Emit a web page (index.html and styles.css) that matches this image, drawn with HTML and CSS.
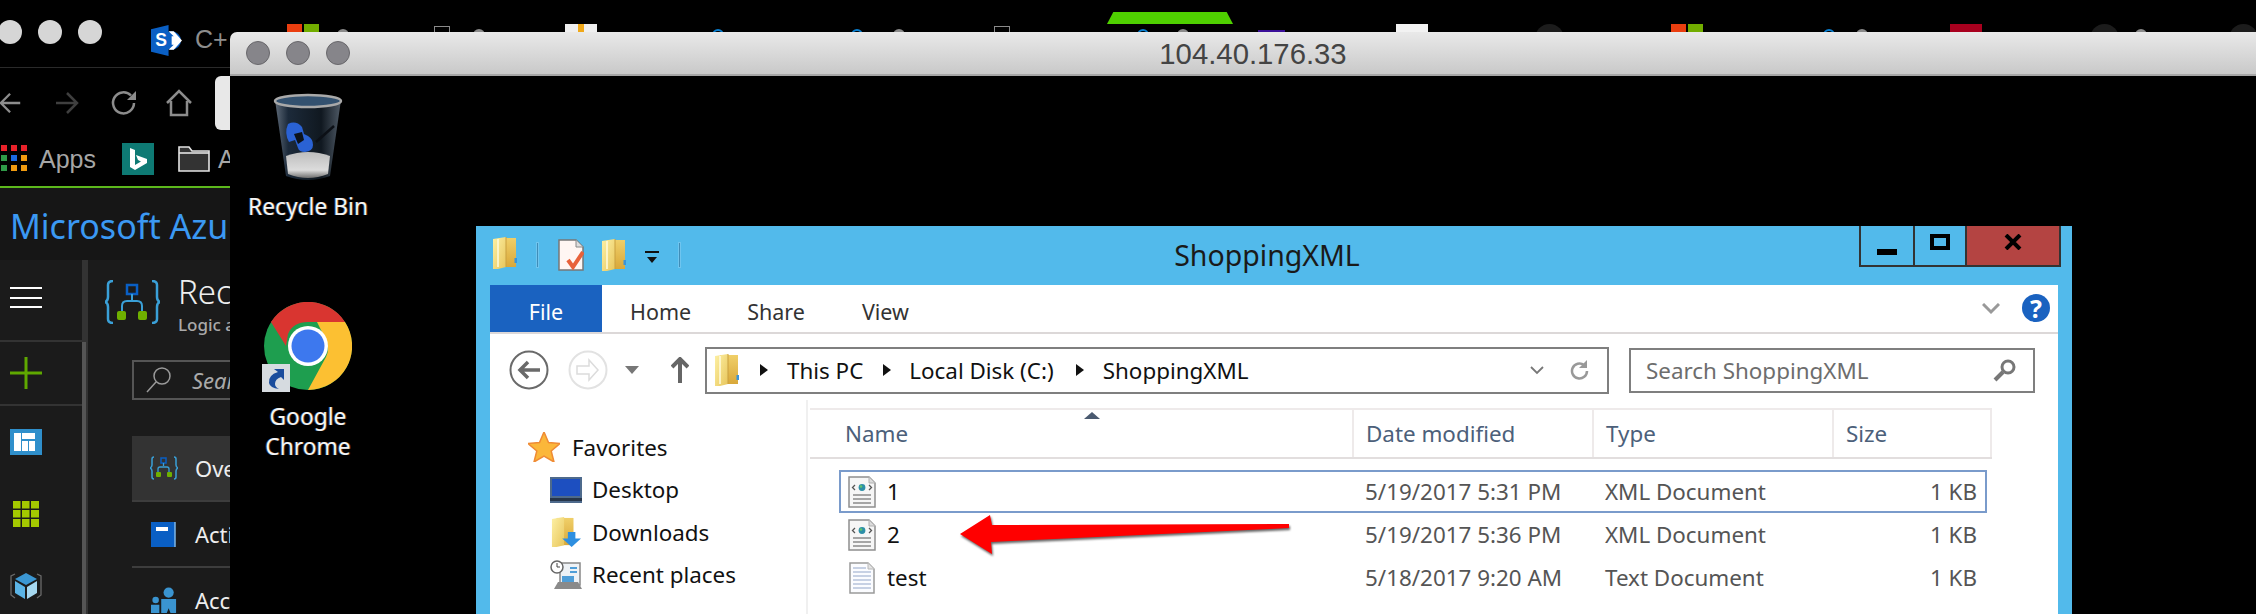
FILE: index.html
```html
<!DOCTYPE html>
<html lang="en">
<head>
<meta charset="utf-8">
<title>104.40.176.33</title>
<link rel="stylesheet" href="styles.css">
</head>
<body>
<svg class="defs" width="0" height="0" aria-hidden="true">
  <defs>
    <linearGradient id="fdoor" x1="0" y1="0" x2="1" y2="1"><stop offset="0" stop-color="#fdf0a4"/><stop offset="1" stop-color="#e8c65c"/></linearGradient>
    <linearGradient id="fback" x1="0" y1="0" x2="0" y2="1"><stop offset="0" stop-color="#f0cf68"/><stop offset="1" stop-color="#d9a83a"/></linearGradient>
    <linearGradient id="binbody" x1="0" y1="0" x2="1" y2="0"><stop offset="0" stop-color="#5e6a78"/><stop offset=".2" stop-color="#1c2a3a"/><stop offset=".7" stop-color="#101820"/><stop offset="1" stop-color="#4f5a66"/></linearGradient>
    <linearGradient id="binpaper" x1="0" y1="0" x2="0" y2="1"><stop offset="0" stop-color="#bdbdbd"/><stop offset=".7" stop-color="#dcdcdc"/><stop offset="1" stop-color="#6e6e6e"/></linearGradient>
    <symbol id="folder" viewBox="0 0 26 32">
      <path d="M6 1h18v29H6z" fill="url(#fback)"/>
      <path d="M1 2 14 0v30l-8 2H1z" fill="url(#fdoor)"/>
      <path d="M14 0v30" stroke="#c9a040" stroke-width="1"/>
      <path d="M6 2v28" stroke="#fffbe0" stroke-width="1.5"/>
      <path d="M22.500 21h2.500v5h-2.500z" fill="#3a94d8"/>
    </symbol>
    <symbol id="xmldoc" viewBox="0 0 28 32">
      <path d="M1 1h20l6 6v24H1z" fill="#f6f6f6" stroke="#8f8f8f" stroke-width="1.500"/>
      <path d="M21 1v6h6" fill="#dcdcdc" stroke="#b0b0b0"/>
      <path d="M7 9 4.500 11.500 7 14M21 9l2.500 2.500L21 14" fill="none" stroke="#555" stroke-width="1.300"/>
      <circle cx="14" cy="11.500" r="3.400" fill="#2d8fa8"/>
      <circle cx="13" cy="10.500" r="1.300" fill="#63c46a"/>
      <path d="M5 19h18M5 23h18M5 27h18" stroke="#8a8a8a" stroke-width="1.600"/>
    </symbol>
    <symbol id="txtdoc" viewBox="0 0 26 32">
      <path d="M1 1h18l6 6v24H1z" fill="#fbfcff" stroke="#9a9a9a" stroke-width="1.500"/>
      <path d="M19 1v6h6" fill="#e4e4e4" stroke="#b8b8b8"/>
      <path d="M4 6h13M4 10h18M4 14h18M4 18h18M4 22h18M4 26h18" stroke="#b6c2dc" stroke-width="1.500"/>
    </symbol>
  </defs>
</svg>

<div class="browser">
  <div class="tabstrip">
    <span class="light"></span><span class="light"></span><span class="light"></span>
    <svg class="tab-s" viewBox="0 0 30 30"><path d="M0 4 17 0v30L0 26z" fill="#0a5fc4"/><circle cx="20" cy="15" r="9" fill="#0a5fc4"/><path d="M17 6h5l8 9-8 9h-5l5-5h-2v-8h2z" fill="#fff"/><text x="4" y="20" class="tab-s-letter">S</text></svg>
    <span class="tab-label">C+</span>
    <span class="peek p-ms"><i class="ms-r"></i><i class="ms-g"></i></span>
    <span class="peek p-arc1 arc-grey"></span>
    <span class="peek p-doc1 doc"></span>
    <span class="peek p-arc2 arc-grey"></span>
    <span class="peek p-white"><i></i></span>
    <span class="peek p-blue1 arc-blue"></span>
    <span class="peek p-blue2 arc-blue"></span>
    <span class="peek p-arc3 arc-grey"></span>
    <span class="peek p-doc2 doc"></span>
    <span class="peek p-nvidia"></span>
    <span class="peek p-blue3 arc-blue"></span>
    <span class="peek p-arc4 arc-grey"></span>
    <span class="peek p-purple"></span>
    <span class="peek p-white2"></span>
    <span class="peek p-dark1 dark"></span>
    <span class="peek p-ms2"><i class="ms-r"></i><i class="ms-g"></i></span>
    <span class="peek p-blue4 arc-blue"></span>
    <span class="peek p-arc5 arc-grey"></span>
    <span class="peek p-crimson"></span>
    <span class="peek p-dark2 dark"></span>
    <span class="peek p-arc6 arc-grey"></span>
    <span class="peek p-dark3 dark"></span>
  </div>

  <div class="navbar">
    <svg class="nav-ic nav-back" viewBox="0 0 26 26"><path d="M23 13H2M12 3 2 13l10 10" fill="none" stroke="#8c8c8c" stroke-width="2.500"/></svg>
    <svg class="nav-ic nav-fwd" viewBox="0 0 26 26"><path d="M2 13h21M13 3l10 10-10 10" fill="none" stroke="#3f3f3f" stroke-width="2.500"/></svg>
    <svg class="nav-ic nav-reload" viewBox="0 0 28 28"><path d="M24 14a10.500 10.500 0 1 1-3-7.500" fill="none" stroke="#8c8c8c" stroke-width="2.500"/><path d="M26 2v9h-9z" fill="#8c8c8c"/></svg>
    <svg class="nav-ic nav-home" viewBox="0 0 28 28"><path d="M2 14 14 2l12 12M6 12v14h16V12" fill="none" stroke="#8c8c8c" stroke-width="2.500"/></svg>
    <span class="omnibox"></span>
  </div>

  <div class="bookmarks">
    <span class="apps"><i class="r"></i><i class="r"></i><i class="r"></i><i class="g"></i><i class="b"></i><i class="o"></i><i class="g"></i><i class="o"></i><i class="o"></i></span>
    <span class="apps-label">Apps</span>
    <svg class="bing" viewBox="0 0 32 32"><rect width="32" height="32" fill="#0e7a74"/><path d="M8 5l5 2v15l6-3.500-3-1.500-2-5 11 4v4l-12 7-5-3z" fill="#fff"/></svg>
    <svg class="bm-folder" viewBox="0 0 32 26"><path d="M1 25V1h10l3 4h17v20z" fill="#333" stroke="#e4e4e4" stroke-width="1.600"/><path d="M1 7h30" stroke="#e4e4e4" stroke-width="1.600"/></svg>
    <span class="apps-label">A</span>
  </div>

  <div class="azure-head">Microsoft Azure</div>

  <div class="portal">
    <nav class="rail">
      <div class="rail-top"><span class="burger"><i></i><i></i><i></i></span></div>
      <div class="rail-add"><svg class="rail-plus" viewBox="0 0 32 32"><path d="M16 0v32M0 16h32" stroke="#5fa800" stroke-width="3"/></svg></div>
      <div class="rail-item"><svg class="r-dash" viewBox="0 0 32 26"><rect width="32" height="26" fill="#2f8fcb"/><path d="M4 4h7v18H4zM12 4h13v6H12zM12 12h6v10h-6zM19 12h6v10h-6z" fill="#fff"/></svg></div>
      <div class="rail-item"><svg class="r-grid" viewBox="0 0 26 26"><path d="M0 0h7.500v7.500H0zM9 0h7.500v7.500H9zM18 0h8v7.500h-8zM0 9h7.500v7.500H0zM9 9h7.500v7.500H9zM18 9h8v7.500h-8zM0 18h7.500v8H0zM9 18h7.500v8H9zM18 18h8v8h-8z" fill="#a4c900"/></svg></div>
      <div class="rail-item"><svg class="r-cube" viewBox="0 0 32 26"><path d="M5 1 1 3v19l4 3M27 1l4 2v19l-4 3" fill="none" stroke="#6a6a6a" stroke-width="1.300"/><path d="M16 0 27 6 16 12 5 6z" fill="#3b97d3"/><path d="M5 8l10 6v12L5 20z" fill="#5bb4e6"/><path d="M27 8l-10 6v12l10-6z" fill="#a6d8f0"/></svg></div>
    </nav>
    <div class="scroll"><i></i></div>
    <section class="blade">
      <header class="blade-head">
        <svg class="la-icon" viewBox="0 0 55 44"><path d="M8 1Q3 1 3 5v12q0 4-3 5 3 1 3 5v12q0 4 5 4M47 1q5 0 5 4v12q0 4 3 5-3 1-3 5v12q0 4-5 4" fill="none" stroke="#3aa0d8" stroke-width="2.500"/><rect x="22" y="5" width="10" height="9" fill="none" stroke="#0a5fc4" stroke-width="2.500"/><path d="M27 14v6M17 31v-5q0-5 5-5h10q5 0 5 5v5" fill="none" stroke="#3aa0d8" stroke-width="2"/><rect x="12" y="31" width="9" height="9" rx="2" fill="#6fb000"/><rect x="33" y="31" width="9" height="9" rx="2" fill="#6fb000"/></svg>
        <div class="blade-titles"><div class="blade-title">Recommended</div><div class="blade-sub">Logic app</div></div>
      </header>
      <div class="blade-search"><svg class="b-search-ic" viewBox="0 0 26 28"><circle cx="16" cy="10" r="8" fill="none" stroke="#9a9a9a" stroke-width="1.500"/><path d="M10 16 1 26" stroke="#9a9a9a" stroke-width="1.500"/></svg><span>Search</span></div>
      <div class="blade-item active"><svg class="bi-ic" viewBox="0 0 28 24"><path d="M4 1Q2 1 2 3v6q0 2-2 3 2 1 2 3v6q0 2 2 2M24 1q2 0 2 2v6q0 2 2 3-2 1-2 3v6q0 2-2 2" fill="none" stroke="#3aa0d8" stroke-width="1.500"/><rect x="11" y="2" width="5" height="5" fill="none" stroke="#0a5fc4" stroke-width="1.500"/><path d="M13.500 7v3M8 16v-3q0-2 2-2h7q2 0 2 2v3" fill="none" stroke="#3aa0d8" stroke-width="1.300"/><rect x="6" y="16" width="5" height="5" rx="1" fill="#6fb000"/><rect x="17" y="16" width="5" height="5" rx="1" fill="#6fb000"/></svg><span>Overview</span></div>
      <div class="blade-item"><svg class="bi-ic" viewBox="0 0 28 26"><path d="M1 1h24v25H1z" fill="#0a5fc4"/><path d="M25 1v25" stroke="#7fb6e6" stroke-width="1.500"/><rect x="6" y="6" width="12" height="4" fill="#fff"/></svg><span>Activity log</span></div>
      <div class="blade-item"><svg class="bi-ic" viewBox="0 0 28 28"><circle cx="19" cy="6" r="5.500" fill="#3a94d0"/><circle cx="5" cy="14" r="3.500" fill="#3a94d0"/><path d="M11 13h16v15h-6l-2-5-2 5h-6zM0 19h9v9H0z" fill="#3a94d0"/></svg><span>Access control</span></div>
    </section>
  </div>
</div>

<main class="remote">
  <div class="remote-bar">
    <span class="rlight"></span><span class="rlight"></span><span class="rlight"></span>
    <span class="remote-title">104.40.176.33</span>
  </div>
  <div class="remote-desktop">
    <div class="shortcut sc-bin">
      <svg class="bin-ic" viewBox="0 0 72 90">
        <path d="M3 8 14 84q22 8 44 0L69 8z" fill="url(#binbody)"/>
        <path d="M14 64q22-8 44 0l-2 18q-20 8-40 0z" fill="url(#binpaper)"/>
        <ellipse cx="36" cy="9" rx="33" ry="6" fill="#33516f" stroke="#a9a9a9" stroke-width="2.500"/>
        <path d="M16 32q8-4 14 3l2 7 4 2q5 3 5 9 0 6-8 7-6 0-7-4l-3-8-6 2q-5-9-1-18z" fill="#2a62d4"/>
        <path d="M22 42l8-2 2 8-6 4z" fill="#0c121a"/>
        <path d="M44 50 62 34" stroke="#0c1016" stroke-width="2.500"/>
      </svg>
      <span class="sc-label">Recycle Bin</span>
    </div>
    <div class="shortcut sc-chrome">
      <svg class="chrome-ic" viewBox="0 0 88 88">
        <circle cx="44" cy="44" r="44" fill="#1e9e4f"/>
        <path d="M7 20A44 44 0 0 1 81 20H44q-15 0-20 12l-2 12z" fill="#d93530"/>
        <path d="M81 20A44 44 0 0 1 44 88L62 55q4-8 0-17l-9-18z" fill="#fcc032"/>
        <circle cx="44" cy="44" r="20" fill="#fff"/>
        <circle cx="44" cy="44" r="16.500" fill="#3d78ee"/>
      </svg>
      <svg class="chrome-badge" viewBox="0 0 28 28"><rect width="28" height="28" fill="#d6dbe0"/><path d="M22 5v11l-3-3q-6 2-6 7 0 3 4 5-9-1-10-6-1-8 9-11L12 5z" fill="#1a4c9c"/></svg>
      <span class="sc-label">Google<br>Chrome</span>
    </div>

    <section class="explorer">
      <div class="ex-title">
        <div class="qat">
          <svg class="q-folder1"><use href="#folder"/></svg>
          <i class="q-sep q-sep1"></i>
          <svg class="q-props" viewBox="0 0 26 32"><path d="M1 1h17l7 7v23H1z" fill="#fff6f3" stroke="#777" stroke-width="1.500"/><path d="M18 1v7h7" fill="#ddd" stroke="#888"/><path d="M10 21l5 7 10-15" fill="none" stroke="#e8613a" stroke-width="4"/></svg>
          <svg class="q-folder2"><use href="#folder"/></svg>
          <svg class="q-drop" viewBox="0 0 14 14"><path d="M0 1h14" stroke="#111" stroke-width="2"/><path d="M2 6h10l-5 6z" fill="#111"/></svg>
          <i class="q-sep q-sep2"></i>
        </div>
        <span class="ex-name">ShoppingXML</span>
        <div class="caption">
          <span class="cap-min"><i></i></span>
          <span class="cap-max"><i></i></span>
          <span class="cap-close"><svg viewBox="0 0 18 16"><path d="M2 1l14 14M16 1 2 15" stroke="#000" stroke-width="4"/></svg></span>
        </div>
      </div>

      <div class="ex-body">
        <div class="ribbon">
          <span class="rb-file">File</span>
          <span class="rb-tab rb-home">Home</span>
          <span class="rb-tab rb-share">Share</span>
          <span class="rb-tab rb-view">View</span>
          <svg class="rb-chev" viewBox="0 0 18 12"><path d="M1 1l8 8 8-8" fill="none" stroke="#999" stroke-width="3"/></svg>
          <span class="rb-help">?</span>
        </div>

        <div class="addr-row">
          <svg class="a-back" viewBox="0 0 40 40"><circle cx="20" cy="20" r="18.500" fill="#fff" stroke="#6a6a6a" stroke-width="2"/><path d="M31 20H10M19 12l-8 8 8 8" fill="none" stroke="#6a6a6a" stroke-width="3.500"/></svg>
          <svg class="a-fwd" viewBox="0 0 40 40"><circle cx="20" cy="20" r="18.500" fill="#fff" stroke="#e2e2e2" stroke-width="2"/><path d="M9 16h12v-6l9 10-9 10v-6H9z" fill="#fff" stroke="#dcdcdc" stroke-width="1.500"/></svg>
          <svg class="a-drop" viewBox="0 0 14 8"><path d="M0 0h14L7 8z" fill="#777"/></svg>
          <svg class="a-up" viewBox="0 0 18 26"><path d="M9 26V3M1 10l8-8 8 8" fill="none" stroke="#666" stroke-width="4"/></svg>
          <div class="addr">
            <svg class="addr-folder"><use href="#folder"/></svg>
            <i class="crumb crumb-a"></i><span class="crumb-text">This PC</span>
            <i class="crumb crumb-b"></i><span class="crumb-text">Local Disk (C:)</span>
            <i class="crumb crumb-c"></i><span class="crumb-text">ShoppingXML</span>
            <svg class="addr-chev" viewBox="0 0 14 9"><path d="M1 1l6 6 6-6" fill="none" stroke="#777" stroke-width="1.800"/></svg>
            <svg class="addr-refresh" viewBox="0 0 20 22"><path d="M17 12a7.500 7.500 0 1 1-3-6" fill="none" stroke="#999" stroke-width="2.500"/><path d="M17 1v8H9z" fill="#999"/></svg>
          </div>
          <div class="search"><span>Search ShoppingXML</span><svg class="search-ic" viewBox="0 0 24 24"><circle cx="15" cy="9" r="6" fill="none" stroke="#777" stroke-width="3"/><path d="M10 14 2 22" stroke="#777" stroke-width="4"/></svg></div>
        </div>

        <div class="content">
          <aside class="tree">
            <div class="tree-row fav">
              <svg class="t-star" viewBox="0 0 32 30"><path d="M16 0l4.500 10.500L32 11.500l-8.800 7.500L26 30l-10-6-10 6 2.800-11L0 11.500l11.500-1z" fill="#fbb73a" stroke="#ef8b34" stroke-width="1.500"/></svg>
              <span>Favorites</span>
            </div>
            <div class="tree-row sub">
              <svg class="t-ic" viewBox="0 0 32 26"><rect width="32" height="26" fill="#4e6a8c"/><rect x="2" y="2" width="28" height="17" fill="#1d4fc0"/><rect y="21" width="32" height="3" fill="#27364a"/></svg>
              <span>Desktop</span>
            </div>
            <div class="tree-row sub">
              <svg class="t-ic t-dl" viewBox="0 0 32 32"><path d="M6 1h18v29H6z" fill="url(#fback)"/><path d="M1 2 14 0v30l-8 2H1z" fill="url(#fdoor)"/><path d="M18 16h8v7h6L22 32 12 23h6z" fill="#2e8fe0"/></svg>
              <span>Downloads</span>
            </div>
            <div class="tree-row sub">
              <svg class="t-ic" viewBox="0 0 32 30"><rect x="10" y="3" width="20" height="22" fill="#eef2f6" stroke="#888" stroke-width="1.500"/><circle cx="7" cy="7" r="6" fill="#fff" stroke="#666" stroke-width="1.500"/><path d="M7 3v4h3" fill="none" stroke="#444"/><rect x="12" y="16" width="12" height="7" fill="#4f9ed8"/><path d="M4 29l4-7h20l4 7z" fill="#8a8a8a"/><path d="M20 8h7M20 12h7" stroke="#4f9ed8" stroke-width="2"/></svg>
              <span>Recent places</span>
            </div>
          </aside>
          <div class="files">
            <div class="columns">
              <i class="sort"></i>
              <span class="col col-name">Name</span>
              <span class="col">Date modified</span>
              <span class="col">Type</span>
              <span class="col col-size">Size</span>
            </div>
            <div class="file selected">
              <span class="f-name"><svg class="f-ic"><use href="#xmldoc"/></svg>1</span>
              <span class="f-meta">5/19/2017 5:31 PM</span>
              <span class="f-meta">XML Document</span>
              <span class="f-meta f-size">1 KB</span>
            </div>
            <div class="file">
              <span class="f-name"><svg class="f-ic"><use href="#xmldoc"/></svg>2</span>
              <span class="f-meta">5/19/2017 5:36 PM</span>
              <span class="f-meta">XML Document</span>
              <span class="f-meta f-size">1 KB</span>
            </div>
            <div class="file">
              <span class="f-name"><svg class="f-ic"><use href="#txtdoc"/></svg>test</span>
              <span class="f-meta">5/18/2017 9:20 AM</span>
              <span class="f-meta">Text Document</span>
              <span class="f-meta f-size">1 KB</span>
            </div>
          </div>
        </div>
      </div>
    </section>
    <svg class="annot" viewBox="0 0 340 44"><path d="M2 21 32 2l2 10 297-1v4L33 29l1 12z" fill="#ff0000" class="annot-path"/></svg>
  </div>
</main>
</body>
</html>
```

FILE: styles.css
```css
* { box-sizing: border-box; }
html, body { margin: 0; height: 100%; }
body {
  background: #000;
  width: 2256px;
  height: 614px;
  overflow: hidden;
  position: relative;
  font-family: "Noto Sans", "Liberation Sans", sans-serif;
}
i { display: block; }
.defs { position: absolute; }

/* background browser */
.browser { width: 2256px; height: 614px; overflow: hidden; background: #000; }
.tabstrip {
  height: 68px;
  border-bottom: 1px solid #2a2a2a;
  display: flex;
  align-items: flex-start;
  position: relative;
  margin-left: -2px;
}
.light { width: 24px; height: 24px; border-radius: 50%; background: #d6d6d6; margin: 20px 16px 0 0; flex: none; }
.tab-s { width: 31px; height: 31px; margin: 25px 0 0 33px; flex: none; }
.tab-s-letter { font: 700 17px "Liberation Sans", sans-serif; fill: #fff; }
.tab-label { font: 25px/30px "Liberation Sans", sans-serif; color: #8d8d8d; margin: 24px 0 0 13px; width: 32px; flex: none; }
.peek { display: block; flex: none; height: 10px; margin-top: 24px; }
.peek i { display: block; }
.p-ms { display: flex; gap: 2px; width: 32px; margin-left: 60px; }
.ms-r { width: 15px; height: 8px; background: #ea3e0f; }
.ms-g { width: 15px; height: 8px; background: #72ad00; }
.arc-grey, .arc-blue { width: 12px; height: 12px; border-radius: 50%; margin-top: 29px; }
.arc-grey { background: #8a8a8a; }
.arc-blue { border: 2px solid #0a7fd0; }
.doc { width: 16px; height: 8px; margin-top: 26px; border: 1px solid #8a8a8a; border-bottom: 0; }
.dark { width: 29px; height: 29px; border-radius: 50%; background: #1c1c1c; }
.p-arc1 { margin-left: 18px; }
.p-doc1 { margin-left: 85px; }
.p-arc2 { margin-left: 23px; }
.p-white { width: 32px; height: 8px; background: #efefef; margin-left: 80px; display: flex; justify-content: center; }
.p-white i { width: 6px; height: 8px; background: #f0a818; }
.p-blue1 { margin-left: 115px; }
.p-blue2 { margin-left: 127px; }
.p-arc3 { margin-left: 30px; }
.p-doc2 { margin-left: 89px; }
.p-nvidia {
  width: 126px; height: 12px; margin: 12px 0 0 97px; background: #4fd000;
  clip-path: polygon(5% 0, 95% 0, 100% 100%, 0 100%);
}
.p-blue3 { margin-left: -96px; }
.p-arc4 { margin-left: 28px; }
.p-purple { width: 27px; height: 3px; margin: 30px 0 0 69px; background: #3a0f98; }
.p-white2 { width: 32px; height: 8px; margin-left: 111px; background: #f2f2f2; }
.p-dark1 { margin-left: 107px; }
.p-ms2 { display: flex; gap: 2px; width: 32px; margin-left: 107px; }
.p-blue4 { margin-left: 120px; }
.p-arc5 { margin-left: 21px; }
.p-crimson { width: 32px; height: 8px; margin-left: 82px; background: #a8001e; }
.p-dark2 { margin-left: 108px; }
.p-arc6 { margin-left: 16px; }
.p-dark3 { margin-left: 82px; }

.navbar { height: 70px; display: flex; align-items: center; position: relative; }
.nav-ic { flex: none; }
.nav-back { width: 24px; height: 26px; margin-left: -1px; }
.nav-fwd { width: 26px; height: 26px; margin-left: 31px; }
.nav-reload { width: 28px; height: 28px; margin-left: 30px; }
.nav-home { width: 28px; height: 28px; margin-left: 27px; }
.omnibox { width: 200px; height: 54px; margin-left: 22px; background: #e8e8e8; border-radius: 6px; }
.bookmarks { height: 48px; display: flex; align-items: flex-start; padding-top: 5px; }
.apps { width: 26px; height: 26px; margin: 2px 0 0 1px; display: grid; grid-template-columns: repeat(3, 6px); gap: 4px; }
.apps i { width: 6px; height: 6px; }
.apps .r { background: #e8222a; }
.apps .g { background: #2f9a48; }
.apps .b { background: #1a6ae0; }
.apps .o { background: #f09a10; }
.apps-label { font: 25px/32px "Liberation Sans", sans-serif; color: #a6a6a6; margin-left: 12px; }
.bing { width: 32px; height: 32px; margin-left: 26px; flex: none; }
.bm-folder { width: 32px; height: 26px; margin: 3px 0 0 24px; flex: none; }
.bm-folder + .apps-label { margin-left: 8px; }
.azure-head {
  height: 74px;
  border-top: 2px solid #5cb81c;
  background: #161616;
  color: #3b99f3;
  font-size: 34px;
  line-height: 77px;
  padding-left: 10px;
  white-space: nowrap;
}
.portal { display: flex; height: 354px; background: #1b1b1b; }
.rail { width: 82px; flex: none; }
.rail-top { height: 82px; padding: 27px 0 0 10px; border-bottom: 2px solid #333; }
.burger { display: grid; gap: 7.5px; width: 32px; }
.burger i { height: 2px; background: #fff; }
.rail-add { height: 64px; border-bottom: 2px solid #333; display: flex; align-items: center; padding-left: 10px; }
.rail-plus { width: 32px; height: 32px; }
.rail-item { height: 72px; display: flex; align-items: center; padding-left: 10px; }
.r-dash, .r-cube { width: 32px; height: 26px; }
.r-grid { width: 26px; height: 26px; margin-left: 3px; }
.scroll { width: 6px; flex: none; background: #333; }
.scroll i { margin: 82px 2px 0 0; height: 272px; background: #555; }
.blade { width: 400px; flex: none; padding-left: 17px; }
.blade-head { height: 100px; display: flex; align-items: flex-start; padding-top: 20px; }
.la-icon { width: 55px; height: 44px; flex: none; }
.blade-titles { margin-left: 18px; margin-top: -10px; }
.blade-title { font-size: 33px; font-weight: 300; line-height: 44px; color: #eee; white-space: nowrap; }
.blade-sub { font-size: 17px; line-height: 22px; font-weight: 500; color: #aaa; white-space: nowrap; }
.blade-search {
  margin-left: 27px; height: 40px; width: 300px;
  border: 2px solid #555; display: flex; align-items: center;
  font-size: 22px; font-style: italic; color: #aaa;
}
.b-search-ic { width: 26px; height: 28px; margin: 0 20px 0 12px; flex: none; }
.blade-item {
  margin-left: 27px; height: 66px; width: 300px; display: flex; align-items: center;
  border-bottom: 2px solid #3d3d3d; font-size: 22px; color: #eee; padding-left: 18px; white-space: nowrap;
}
.blade-search + .blade-item { margin-top: 36px; }
.blade-item.active { background: #333; }
.bi-ic { width: 28px; height: 26px; flex: none; margin-right: 17px; }

/* remote desktop window */
.remote { position: absolute; left: 230px; top: 32px; width: 2026px; height: 582px; }
.remote-bar {
  height: 44px;
  border-top-left-radius: 7px;
  background: linear-gradient(#e9e9e9, #c9c9c9);
  border-bottom: 2px solid #a6a6a6;
  display: flex;
  align-items: center;
  padding-left: 16px;
  gap: 16px;
  position: relative;
}
.rlight { width: 24px; height: 24px; border-radius: 50%; background: #86858a; border: 1px solid #68676b; }
.remote-title {
  position: absolute; left: 0; right: 0; top: 6px; text-align: center;
  padding-left: 20px;
  font: 29.300px/32px "Liberation Sans", sans-serif; color: #444;
}
.remote-desktop { position: relative; height: 538px; background: #000; overflow: hidden; }
.shortcut { position: absolute; display: flex; flex-direction: column; align-items: center; width: 140px; }
.sc-label {
  font-size: 22.800px; line-height: 30px; color: #f4f4f4; text-align: center; white-space: nowrap;
  text-shadow: -1px 0 0 rgba(80,160,255,.4), 1px 0 0 rgba(255,150,60,.35);
}
.sc-bin { left: 8px; top: 16px; }
.bin-ic { width: 72px; height: 90px; }
.sc-bin .sc-label { margin-top: 10px; }
.sc-chrome { left: 8px; top: 226px; }
.chrome-ic { width: 88px; height: 88px; }
.chrome-badge { position: absolute; left: 24px; top: 62px; width: 28px; height: 28px; }
.sc-chrome .sc-label { margin-top: 12px; }

/* explorer */
.explorer {
  position: absolute; left: 246px; top: 150px; width: 1596px; height: 388px;
  background: #52baeb;
  padding: 0 14px;
  color: #111;
}
.ex-title { height: 59px; position: relative; display: flex; align-items: flex-start; }
.qat { display: flex; align-items: flex-start; padding-top: 11px; }
.q-folder1 { width: 26px; height: 32px; margin-left: 2px; }
.q-sep { width: 3px; height: 26px; background: #3f8db8; border: 1px solid #6fc5ef; margin-top: 5px; }
.q-sep1 { margin-left: 18px; }
.q-props { width: 26px; height: 32px; margin: 2px 0 0 19px; }
.q-folder2 { width: 26px; height: 32px; margin: 2px 0 0 17px; }
.q-drop { width: 14px; height: 14px; margin: 14px 0 0 18px; }
.q-sep2 { margin-left: 19px; }
.ex-name {
  position: absolute; left: 0; right: 0; top: 10px; text-align: center; padding-right: 14px;
  font-size: 28.500px; line-height: 38px; color: #1a1a1a;
}
.caption { position: absolute; right: -3px; top: 0; height: 41px; display: flex; border: 2px solid #333; border-top: 0; }
.caption span { display: flex; align-items: center; justify-content: center; height: 39px; }
.cap-min { width: 54px; border-right: 2px solid #333; padding-top: 12px; }
.cap-min i { width: 20px; height: 6px; background: #000; }
.cap-max { width: 52px; border-right: 2px solid #333; padding-bottom: 8px; }
.cap-max i { width: 20px; height: 16px; border: 4px solid #000; background: #52baeb; }
.cap-close { width: 92px; background: #b44442; padding-bottom: 8px; }
.cap-close svg { width: 18px; height: 16px; }
.ex-body { background: #fff; height: 329px; }
.ribbon { height: 49px; display: flex; align-items: stretch; border-bottom: 2px solid #dcd8d8; font-size: 21.500px; position: relative; }
.rb-file { width: 112px; background: #1a62c0; color: #fff; display: flex; align-items: center; justify-content: center; height: 47px; padding-top: 6px; }
.rb-tab { display: flex; align-items: center; color: #333; padding-top: 6px; }
.rb-home { margin-left: 28px; }
.rb-share { margin-left: 56px; }
.rb-view { margin-left: 57px; }
.rb-chev { width: 18px; height: 12px; margin: 18px 0 0 auto; }
.rb-help {
  width: 28px; height: 28px; border-radius: 50%; background: #1a62c0; color: #fff;
  font: 700 25px/28px "Noto Sans", sans-serif; text-align: center; margin: 9px 8px 0 22px;
}
.addr-row { height: 66px; display: flex; align-items: center; font-size: 22.400px; padding-top: 6px; }
.a-back { width: 40px; height: 40px; margin-left: 19px; flex: none; }
.a-fwd { width: 40px; height: 40px; margin-left: 19px; flex: none; }
.a-drop { width: 14px; height: 8px; margin-left: 17px; flex: none; }
.a-up { width: 18px; height: 26px; margin-left: 32px; flex: none; }
.addr {
  width: 904px; height: 47px; margin-left: 16px; border: 2px solid #7f7f7f;
  display: flex; align-items: center; color: #111; flex: none;
}
.addr-folder { width: 26px; height: 32px; margin-left: 7px; flex: none; }
.crumb { width: 0; height: 0; border-left: 8px solid #111; border-top: 6.500px solid transparent; border-bottom: 6.500px solid transparent; flex: none; }
.crumb-a { margin: 0 19px 0 20px; }
.crumb-b { margin: 0 18px 0 20px; }
.crumb-c { margin: 0 19px 0 22px; }
.crumb-text { white-space: nowrap; }
.addr-chev { width: 14px; height: 9px; margin-left: auto; flex: none; }
.addr-refresh { width: 20px; height: 22px; margin: 0 17px 0 26px; flex: none; }
.search {
  width: 406px; height: 45px; margin-left: 20px; border: 2px solid #7f7f7f;
  display: flex; align-items: center; padding: 0 16px 0 15px; color: #6d6d6d; flex: none;
}
.search-ic { width: 24px; height: 24px; margin-left: auto; }
.content { display: flex; height: 214px; }
.tree { width: 318px; flex: none; padding-top: 26px; font-size: 22.400px; border-right: 2px solid #f0f0f0; }
.tree-row { height: 42.500px; display: flex; align-items: center; }
.fav { padding-left: 38px; }
.t-star { width: 32px; height: 30px; margin-right: 12px; }
.sub { padding-left: 60px; }
.t-ic { width: 32px; height: 30px; margin-right: 10px; flex: none; }
.files { flex: 1; position: relative; padding-top: 8px; }
.columns {
  display: grid;
  grid-template-columns: 544px 240px 240px 158px;
  height: 51px;
  border-top: 2px solid #eeeaea;
  border-bottom: 2px solid #e2dede;
  margin-left: 2px;
  width: 1182px;
  color: #4c607a;
  font-size: 22.400px;
  position: relative;
}
.col { display: flex; align-items: center; padding-left: 12px; border-right: 2px solid #eeeaea; }
.col-name { padding-left: 35px; }
.sort { position: absolute; left: 274px; top: 2px; width: 0; height: 0; border: 8px solid transparent; border-top: 0; border-bottom: 7px solid #4a5a70; }
.file {
  display: grid;
  grid-template-columns: 524px 240px 240px 132px;
  height: 43px;
  align-items: center;
  margin-left: 31px;
  width: 1148px;
  font-size: 22.400px;
  border: 2px solid transparent;
}
.file.selected { border-color: #7a9bcb; margin-top: 11px; }
.f-name { display: flex; align-items: center; color: #111; }
.f-ic { width: 28px; height: 32px; margin: 0 11px 0 7px; flex: none; }
.f-meta { color: #555; white-space: nowrap; }
.f-size { text-align: right; }

.annot { position: absolute; left: 728px; top: 437px; width: 340px; height: 44px; overflow: visible; }
.annot-path { filter: drop-shadow(1px 2px 1px rgba(0,0,0,.6)); }
```
